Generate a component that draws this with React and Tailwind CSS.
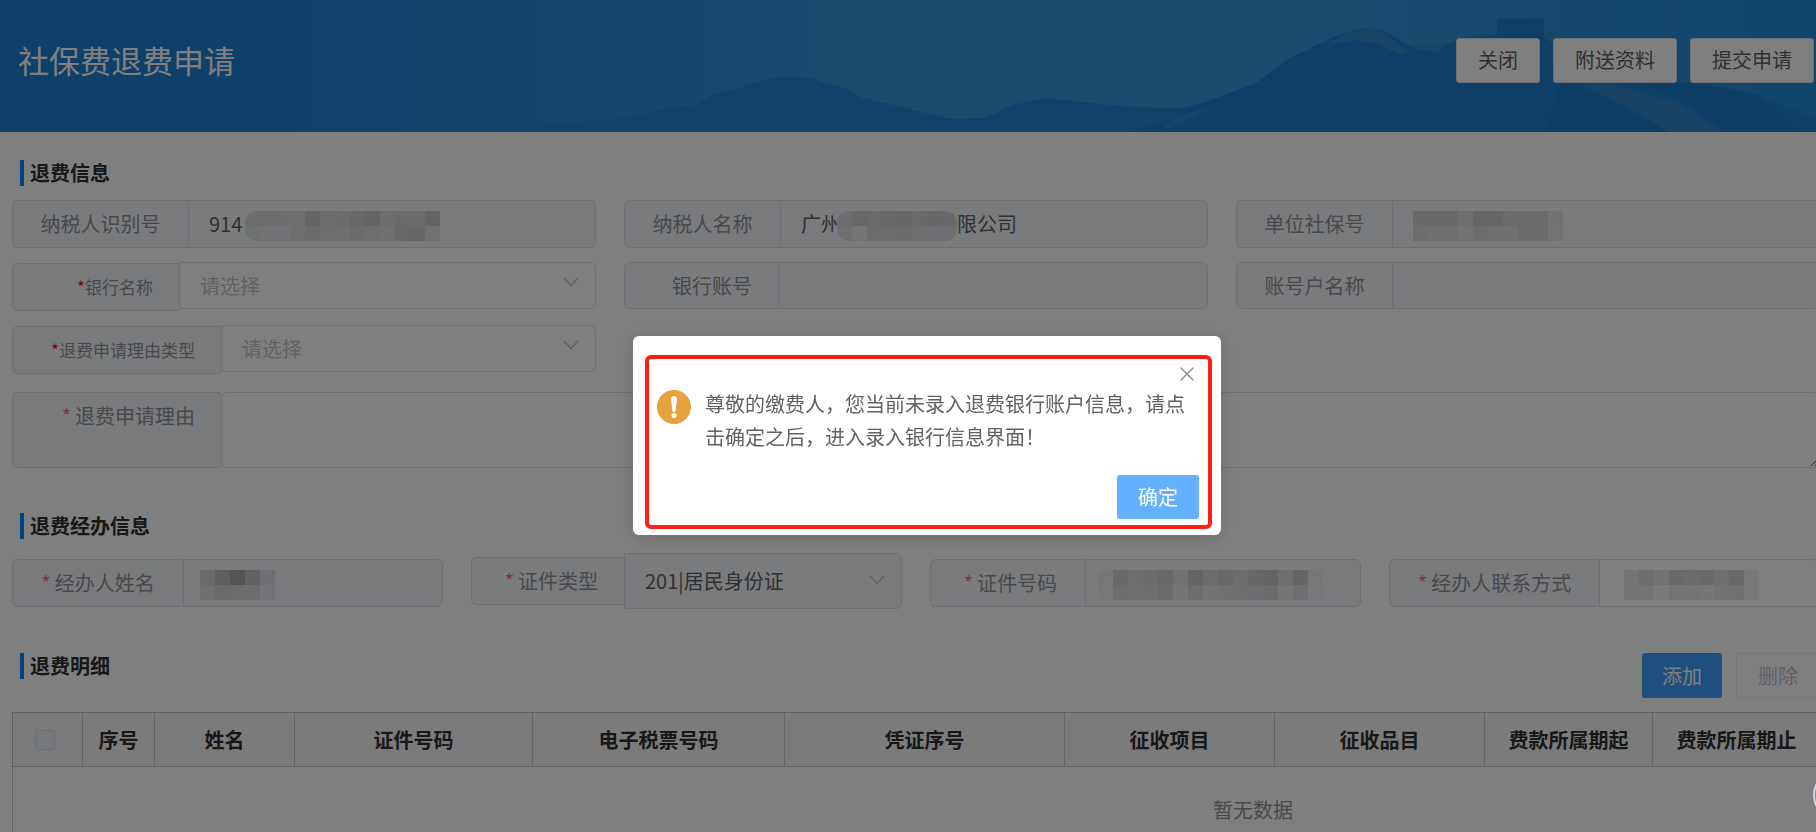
import { useState } from 'react'
import { X } from 'lucide-react'

const font = "font-['Noto_Sans_CJK_SC',sans-serif]"

const columns = [
  { title: '序号', width: 'w-[72px]' },
  { title: '姓名', width: 'w-[140px]' },
  { title: '证件号码', width: 'w-[238px]' },
  { title: '电子税票号码', width: 'w-[252px]' },
  { title: '凭证序号', width: 'w-[280px]' },
  { title: '征收项目', width: 'w-[210px]' },
  { title: '征收品目', width: 'w-[210px]' },
  { title: '费款所属期起', width: 'w-[168px]' },
  { title: '费款所属期止', width: 'w-[168px]' }
]

// Two rows of grey blocks hiding private values
const masks = {
  taxId: [
    ['#dadbdd', '#d8d9dd', '#d8dadf', '#dcdee1', '#c9cacc', '#d8d9db', '#d6d7da', '#cfd0d3', '#c9cacd', '#d9dbde', '#d5d6d8', '#d6d7d9', '#c8c9cb'],
    ['#dfe0e2', '#e3e5e9', '#e3e5eb', '#dcdde0', '#d5d6d8', '#dcdddf', '#dcdde1', '#d5d6d8', '#dbdcdf', '#e0e1e4', '#d2d3d4', '#cdcecf', '#e2e3e5']
  ],
  company: [
    ['#d7d8da', '#d0d1d3', '#d4d5d7', '#cfd0d2', '#cdced0', '#d4d5d7', '#ccced0', '#d1d2d4'],
    ['#dedfe1', '#eaeaea', '#d8d9db', '#d8d9db', '#d6d7d9', '#dcdddf', '#dbdce2', '#dcdddf']
  ],
  socialNo: [
    ['#d1d2d4', '#d1d2d4', '#d1d2d4', '#dcdde0', '#cbcccf', '#cccdd0', '#d6d7da', '#d3d4d5', '#d3d4d5', '#e3e4e9'],
    ['#d9dadc', '#dddee1', '#dedfe2', '#e3e4e7', '#d8d9dc', '#dcdde0', '#e0e1e4', '#d5d6d8', '#d6d7d9', '#e8e9ed']
  ],
  name: [
    ['#d4d4d3', '#bebfc3', '#a6abad', '#c4c4c7', '#e0e1e8'],
    ['#dfdfde', '#d6d7da', '#dad9d7', '#dbdadb', '#e8e9f0']
  ],
  idNo: [
    ['#eeeff1', '#ced0d2', '#dbdcdf', '#d6d7da', '#cfd0d2', '#e3e4e7', '#c8cacd', '#d8d9dc', '#cfd0d2', '#d9dadd', '#cecfd2', '#c8c9cc', '#dbdde0', '#cacbce', '#eeeff3'],
    ['#f0f1f3', '#d9dadc', '#dfdfdf', '#dcdcdc', '#d9d7d7', '#e8e9eb', '#dadbdd', '#e3e4e7', '#e0e1e3', '#dcdddf', '#d9dadc', '#d6d7d9', '#e8e9eb', '#dddee1', '#f0f1f4']
  ],
  phone: [
    ['#e8e8e8', '#dadada', '#e1e4e8', '#d2d3d5', '#d6d7d9', '#d0d2d4', '#dddddd', '#d2d2d2', '#f0f2f5'],
    ['#ececec', '#e6e6e6', '#f4f4f4', '#ebebeb', '#e8e8e8', '#ececec', '#e5e5e5', '#e0e0e0', '#f2f2f2']
  ]
}

const Mosaic = ({ rows, className = '' }) => (
  <div className={`mt-1 shrink-0 overflow-hidden ${className}`} aria-hidden="true">
    {rows.map((row, r) => (
      <div key={r} className="flex">
        {row.map((color, c) => (
          <span key={c} className="block h-[15px] w-[15px]" style={{ backgroundColor: color }} />
        ))}
      </div>
    ))}
  </div>
)

const Star = ({ small }) => (
  <span className={small ? 'text-[#ff0000]' : 'mr-1 text-[#f56c6c]'}>*</span>
)

const labelBase = 'flex shrink-0 items-center rounded-l-md border border-[#dcdfe6] bg-[#f5f7fa] text-[#909399]'

// Label joined to a text box
const Field = ({ id, label, required, width, align = 'justify-center', height = 'h-12', value = '', valueWidth = 'w-full', enabled, children }) => (
  <div className={`flex ${height}`}>
    <label htmlFor={id} className={`${labelBase} ${width} ${align} border-r-0 text-[20px]`}>
      {required && <Star />}
      {label}
    </label>
    <div className={`flex min-w-0 flex-1 items-center rounded-r-md border border-[#dcdfe6] ${valueWidth === 'w-0' ? 'pl-4' : 'pl-5'} ${enabled ? 'bg-white' : 'bg-[#f5f7fa]'}`}>
      <input
        id={id}
        type="text"
        defaultValue={value}
        disabled={!enabled}
        className={`${valueWidth} min-w-0 bg-transparent text-[20px] text-[#606266] outline-none`}
      />
      {children}
    </div>
  </div>
)

const SelectBox = ({ id, options, disabled, height = 'h-[47px]', arrow = 'top-[15px]' }) => (
  <div className={`relative min-w-0 flex-1 ${height}`}>
    <select
      id={id}
      disabled={disabled}
      className={`h-full w-full appearance-none rounded-r-md border border-[#dcdfe6] pl-5 text-[20px] opacity-100 outline-none ${
        disabled ? 'bg-[#f5f7fa] text-[#606266]' : 'bg-white text-[#c0c4cc]'
      }`}
    >
      {options.map((option) => (
        <option key={option}>{option}</option>
      ))}
    </select>
    <svg className={`pointer-events-none absolute right-[17px] h-[10px] w-4 ${arrow}`} viewBox="0 0 16 10" fill="none" stroke="#c0c4cc" strokeWidth="1.500">
      <path d="M1 1l7 7.500 7-7.500" />
    </svg>
  </div>
)

const SectionTitle = ({ children }) => (
  <h2 className="ml-2 flex h-[26px] items-center border-l-4 border-[#0088ff] pl-[6px] text-[20px] font-bold text-[#303133]">
    {children}
  </h2>
)

const Mountains = () => (
  <svg className="absolute inset-0 h-full w-full" viewBox="0 0 1816 132" preserveAspectRatio="none" aria-hidden="true">
    <defs>
      <linearGradient id="sky" x1="0" y1="0" x2="1" y2="0">
        <stop offset="0" stopColor="#1e80d2" />
        <stop offset="0.2" stopColor="#2082d4" />
        <stop offset="0.32" stopColor="#2a8cd6" />
        <stop offset="0.48" stopColor="#3698dc" />
        <stop offset="0.72" stopColor="#3498dc" />
        <stop offset="1" stopColor="#248ad6" />
      </linearGradient>
    </defs>
    <rect width="1816" height="132" fill="url(#sky)" />
    <path d="M520 132C550 121 600 121 630 118L660 110L698 104L710 96L738 88L776 77L808 78L850 90L862 98L890 104L950 119L985 118L1012 105L1046 98L1082 102L1130 107L1180 108L1220 99V132Z" fill="#2286d4" />
    <path d="M1130 132L1166 118L1210 100L1254 84L1290 58L1335 36L1362 28L1382 30L1410 46L1440 44L1470 34L1497 35V19H1544V38L1580 58L1640 78L1700 84L1750 92L1816 118V132Z" fill="#1f7fce" />
    <path d="M1326 44L1350 32L1372 28L1388 36L1408 51L1400 54L1376 43L1356 40Z" fill="#3b92d0" opacity=".7" />
    <path d="M1408 46L1432 43L1470 34L1490 33L1452 42L1436 52L1424 50Z" fill="#3b92d0" opacity=".7" />
    <path d="M1540 44L1590 74L1620 86L1680 104L1722 132H1670L1630 108L1580 84Z" fill="#3888c6" opacity=".6" />
    <path d="M1164 130L1170 118L1216 106L1180 124Z" fill="#3b90cc" opacity=".6" />
    <path d="M1545 132L1560 84L1600 94L1668 132ZM1640 82L1700 84L1756 96L1800 132H1726L1690 104Z" fill="#1c76c4" opacity=".6" />
  </svg>
)

const headerButton = 'h-[45px] rounded-[3px] border border-[#dcdfe6] bg-white px-[21px] text-[20px] text-[#606266]'

const App = () => {
  const [open, setOpen] = useState(true)

  return (
    <div className={`relative h-screen overflow-hidden bg-white ${font}`}>
      {/* Header */}
      <header className="relative flex h-[132px] items-center justify-between overflow-hidden pr-[2px] pb-3 pl-[18px]">
        <Mountains />
        <h1 className="relative text-[31px] text-white">社保费退费申请</h1>
        <div className="relative flex gap-[13px]">
          <button type="button" className={headerButton}>关闭</button>
          <button type="button" className={headerButton}>附送资料</button>
          <button type="button" className={headerButton}>提交申请</button>
        </div>
      </header>

      <main className="-mr-1 ml-3 pt-7">
        {/* Refund info */}
        <SectionTitle>退费信息</SectionTitle>
        <div className="mt-[14px] grid grid-cols-3 gap-x-7 gap-y-[14px]">
          <Field id="taxId" label="纳税人识别号" width="w-[176px]" value="914" valueWidth="w-9">
            <Mosaic rows={masks.taxId} className="rounded-l-xl" />
          </Field>
          <Field id="company" label="纳税人名称" width="w-[156px]" value="广州" valueWidth="w-9">
            <Mosaic rows={masks.company} className="rounded-xl" />
            <span className="text-[20px] text-[#606266]">限公司</span>
          </Field>
          <Field id="socialNo" label="单位社保号" width="w-[156px]" valueWidth="w-0">
            <Mosaic rows={masks.socialNo} className="ml-1" />
          </Field>

          <div className="flex items-start">
            <label htmlFor="bank" className={`${labelBase} mt-px h-12 w-[167px] justify-end border-r-0 pr-[26px] text-[17px]`}>
              <Star small />
              银行名称
            </label>
            <SelectBox id="bank" options={['请选择']} />
          </div>
          <Field id="account" label="银行账号" width="w-[154px]" align="justify-end pr-[26px]" height="h-[47px]" />
          <Field id="accountName" label="账号户名称" width="w-[156px]" height="h-[47px]" />

          <div className="flex items-start">
            <label htmlFor="reasonType" className={`${labelBase} mt-px h-12 w-[209px] justify-end border-r-0 pr-[26px] text-[17px]`}>
              <Star small />
              退费申请理由类型
            </label>
            <SelectBox id="reasonType" options={['请选择']} />
          </div>
        </div>

        <div className="mt-[18px] flex">
          <label htmlFor="reason" className={`${labelBase} h-[76px] w-[209px] items-start justify-end border-r-0 pt-2 pr-[26px] text-[20px]`}>
            <Star />
            退费申请理由
          </label>
          <textarea id="reason" className="h-[76px] min-w-0 flex-1 rounded-md border border-[#dcdfe6] bg-white px-5 py-2 text-[20px] text-[#606266] outline-none" />
        </div>

        {/* Handler info */}
        <div className="mt-[45px]">
          <SectionTitle>退费经办信息</SectionTitle>
        </div>
        <div className="mt-[14px] grid grid-cols-4 items-center gap-x-7">
          <Field id="handler" label="经办人姓名" required width="w-[171px]" height="h-13 pt-1" valueWidth="w-0">
            <Mosaic rows={masks.name} />
          </Field>
          <div className="flex items-center">
            <label htmlFor="idType" className={`${labelBase} h-12 w-[153px] justify-end border-r-0 pr-[26px] text-[20px]`}>
              <Star />
              证件类型
            </label>
            <SelectBox id="idType" options={['201|居民身份证']} disabled height="h-14" arrow="top-[22px]" />
          </div>
          <Field id="idNo" label="证件号码" required width="w-[155px]" height="h-13 pt-1" align="justify-end pr-7" valueWidth="w-0">
            <Mosaic rows={masks.idNo} className="-ml-1 rounded-l-xl" />
          </Field>
          <Field id="phone" label="经办人联系方式" required width="w-[210px]" height="h-13 pt-1" enabled valueWidth="w-0">
            <Mosaic rows={masks.phone} className="ml-2" />
          </Field>
        </div>

        {/* Refund details */}
        <div className="mt-11 flex items-start justify-between">
          <SectionTitle>退费明细</SectionTitle>
          <div className="flex gap-[14px]">
            <button type="button" className="h-[45px] rounded-[3px] bg-[#409eff] px-5 text-[20px] text-white">添加</button>
            <button type="button" disabled className="h-[45px] rounded-[3px] border border-[#ebeef5] bg-white px-[21px] text-[20px] text-[#c0c4cc]">删除</button>
          </div>
        </div>
        <div className="mt-[14px] overflow-hidden">
          <table className="w-[2482px] table-fixed border-collapse border border-[#c8c9d4] text-[20px]">
            <thead>
              <tr className="h-[54px] bg-[#f6f6f6] text-[#303133]">
                <th className="w-[70px] border border-[#c8c9d4] pr-[6px]">
                  <input
                    type="checkbox"
                    disabled
                    aria-label="全选"
                    className="mx-auto block h-5 w-5 appearance-none rounded-[3px] border border-[#dcdfe6] bg-[#edf2fc]"
                  />
                </th>
                {columns.map((column) => (
                  <th key={column.title} className={`${column.width} border border-[#c8c9d4] font-bold`}>
                    {column.title}
                  </th>
                ))}
                <th className="border border-[#c8c9d4]" />
              </tr>
            </thead>
            <tbody>
              <tr className="h-[86px]">
                <td colSpan={11} className="text-center text-[#909399]">暂无数据</td>
              </tr>
            </tbody>
          </table>
        </div>
      </main>

      {/* Confirm dialog */}
      {open && (
        <div className="fixed inset-0 flex items-center justify-center bg-black/50 pt-[39px] pl-[38px]">
          <div role="dialog" aria-modal="true" className="relative w-[588px] rounded-md bg-white px-[22px] pt-8 pb-4 shadow-[0_2px_16px_rgba(0,0,0,0.15)]">
            <div className="pointer-events-none absolute top-[19px] right-[9px] bottom-[6px] left-3 rounded-md border-4 border-[#ff1f0f]" />
            <button type="button" aria-label="关闭" onClick={() => setOpen(false)} className="absolute top-[26px] right-[22px] text-[#909399]">
              <X size={24} strokeWidth={1.5} />
            </button>
            <div className="flex gap-[14px] pt-[19px] pl-[2px]">
              <svg className="mt-[3px] h-[34px] w-[34px] shrink-0" viewBox="0 0 34 34" aria-hidden="true">
                <circle cx="17" cy="17" r="17" fill="#e6a23c" />
                <path d="M14 9a3 3 0 0 1 6 0l-1.300 11.500a1.700 1.700 0 0 1-3.400 0z" fill="#fff" />
                <circle cx="17" cy="25.500" r="2.500" fill="#fff" />
              </svg>
              <p className="w-[484px] text-[20px] leading-[33px] text-[#606266]">
                尊敬的缴费人，您当前未录入退费银行账户信息，请点击确定之后，进入录入银行信息界面！
              </p>
            </div>
            <div className="mt-[22px] flex justify-end">
              <button type="button" onClick={() => setOpen(false)} className="h-11 rounded-[3px] bg-[#66b1ff] px-[21px] text-[20px] text-white">
                确定
              </button>
            </div>
          </div>
        </div>
      )}

      {/* Floating helper */}
      <div className="fixed -right-[47px] bottom-3 h-[50px] w-[50px] rounded-full border-2 border-[#d8d8e0] bg-[#808080]" />
    </div>
  )
}

export default App
